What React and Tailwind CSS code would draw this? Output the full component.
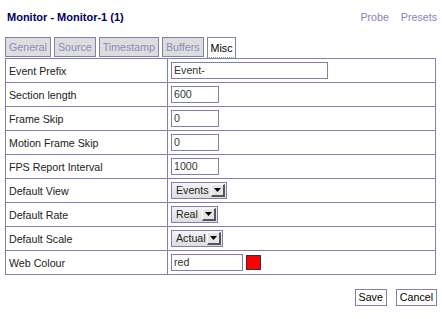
import React from "react";

const B = "border-[#7f7fb2]";

function Sel({ label, w }) {
  return (
    <div className={`flex items-center h-[17px] border ${B} bg-gradient-to-b from-[#f4f4f4] to-[#dedede] pl-[4px] pr-[1px]`} style={{ width: w }}>
      <span className="flex-1 text-[10.67px] leading-none text-[#222]">{label}</span>
      <span className="w-[14px] h-[13px] bg-[#e4e4e4] border-r-2 border-b-2 border-[#555] border-t border-l border-t-white border-l-white flex items-center justify-center">
        <svg width="7" height="4" viewBox="0 0 7 4"><path d="M0 0H7L3.5 4Z" fill="#000" /></svg>
      </span>
    </div>
  );
}

function Inp({ value, w }) {
  return (
    <div className={`h-[17px] border ${B} bg-white px-[2px] flex items-center text-[10.67px] leading-none text-[#333]`} style={{ width: w }}>
      {value}
    </div>
  );
}

export default function App() {
  const rows = [
    ["Event Prefix", <Inp value="Event-" w={157} />],
    ["Section length", <Inp value="600" w={48} />],
    ["Frame Skip", <Inp value="0" w={48} />],
    ["Motion Frame Skip", <Inp value="0" w={48} />],
    ["FPS Report Interval", <Inp value="1000" w={48} />],
    ["Default View", <Sel label="Events" w={56} />],
    ["Default Rate", <Sel label="Real" w={47} />],
    ["Default Scale", <Sel label="Actual" w={52} />],
    [
      "Web Colour",
      <div className="flex items-center gap-[3px]">
        <Inp value="red" w={72} />
        <span className="w-[15px] h-[15px] bg-[#ff0000] border border-[#333]" />
      </div>,
    ],
  ];
  const tabs = ["General", "Source", "Timestamp", "Buffers"];
  return (
    <div className="w-[442px] h-[319px] bg-white px-[5px] pt-[9px]" style={{ fontFamily: '"Liberation Sans", Arial, sans-serif' }}>
      <div className="flex items-center h-[16px]">
        <div className="pl-[2px] text-[11px] font-bold text-[#000066]">Monitor - Monitor-1 (1)</div>
        <div className="ml-auto flex gap-[12px] text-[10.67px] text-[#8585b8]">
          <span>Probe</span>
          <span>Presets</span>
        </div>
      </div>
      <div className="flex gap-[3px] mt-[12px] h-[21px]">
        {tabs.map((t) => (
          <div key={t} className={`h-[20px] border ${B} bg-[#dddddd] px-[3px] flex items-center text-[10.67px] text-[#8c8cba]`}>
            {t}
          </div>
        ))}
        <div className={`h-[21px] border ${B} bg-white px-[3px] flex items-center text-[10.67px] text-black`} style={{ borderStyle: "solid solid dotted solid", borderBottomColor: "#999" }}>
          Misc
        </div>
      </div>
      <table className={`w-[431px] border-collapse border ${B}`}>
        <tbody>
          {rows.map(([l, c]) => (
            <tr key={l} className="h-[24px]">
              <td className={`border ${B} w-[162px] pl-[3px] text-[10.67px] text-[#222] p-0`}>{l}</td>
              <td className={`border ${B} pl-[3px] p-0 align-middle`}>{c}</td>
            </tr>
          ))}
        </tbody>
      </table>
      <div className="flex justify-end gap-[9px] mt-[14px]">
        <button className={`h-[17px] border ${B} bg-white px-[3px] text-[10.67px] leading-none text-black`}>Save</button>
        <button className={`h-[17px] border ${B} bg-white px-[3px] text-[10.67px] leading-none text-black`}>Cancel</button>
      </div>
    </div>
  );
}
